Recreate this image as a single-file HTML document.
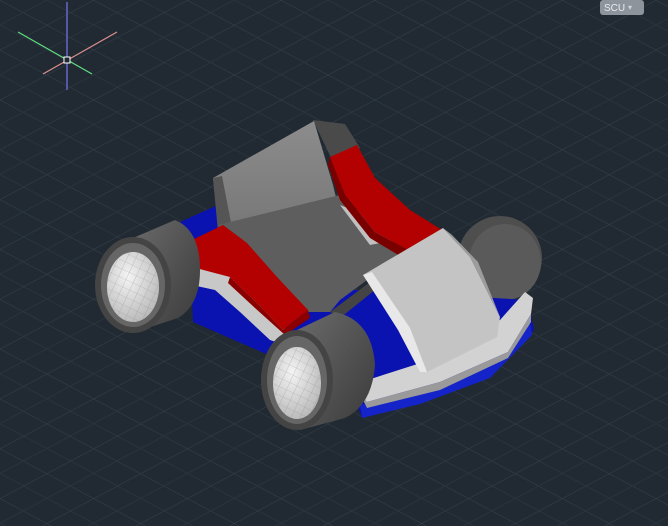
<!DOCTYPE html>
<html><head><meta charset="utf-8"><style>
html,body{margin:0;padding:0;background:#212a32;width:668px;height:526px;overflow:hidden}
svg{display:block}
</style></head><body>
<svg width="668" height="526" viewBox="0 0 668 526" xmlns="http://www.w3.org/2000/svg">
<defs>
<pattern id="g1" width="44" height="44" patternUnits="userSpaceOnUse" patternTransform="rotate(28)">
<line x1="0" y1="0" x2="44" y2="0" stroke="#35414c" stroke-width="1.1"/>
<line x1="0" y1="22" x2="44" y2="22" stroke="#29333c" stroke-width="1"/>
</pattern>
<pattern id="g2" width="44" height="44" patternUnits="userSpaceOnUse" patternTransform="rotate(-28)">
<line x1="0" y1="0" x2="44" y2="0" stroke="#35414c" stroke-width="1.1"/>
<line x1="0" y1="22" x2="44" y2="22" stroke="#29333c" stroke-width="1"/>
</pattern>
<pattern id="hg" width="8" height="8" patternUnits="userSpaceOnUse" patternTransform="rotate(25)">
<path d="M0,0 H8 M0,0 V8" stroke="#808080" stroke-width="0.6" fill="none"/>
</pattern>
<linearGradient id="tire" x1="0" y1="0" x2="1" y2="1"><stop offset="0" stop-color="#6a6a6a"/><stop offset="1" stop-color="#3a3a3a"/></linearGradient>
<linearGradient id="seat" x1="0" y1="0" x2="0" y2="1"><stop offset="0" stop-color="#8c8c8c"/><stop offset="0.6" stop-color="#7a7a7a"/><stop offset="1" stop-color="#555"/></linearGradient>
<radialGradient id="hub" cx="0.4" cy="0.35" r="0.7"><stop offset="0" stop-color="#f4f4f4"/><stop offset="1" stop-color="#b8b8b8"/></radialGradient>
</defs>
<rect width="668" height="526" fill="#212a32"/>
<rect width="668" height="526" fill="url(#g1)"/>
<rect width="668" height="526" fill="url(#g2)"/>

<line x1="67" y1="2" x2="67" y2="90" stroke="#7070e0" stroke-width="1.3"/>
<line x1="18" y1="32" x2="92" y2="74" stroke="#60e080" stroke-width="1.2"/>
<line x1="43" y1="74" x2="117" y2="32" stroke="#e09090" stroke-width="1.2"/>
<rect x="64" y="57" width="6" height="6" fill="#212830" stroke="#ffffff" stroke-width="1"/>

<rect x="600" y="0" width="44" height="15" rx="3" fill="#8e949c"/>
<text x="604" y="11" font-family="Liberation Sans, sans-serif" font-size="10" fill="#e8ecf0">SCU</text>
<text x="628" y="10" font-family="Liberation Sans, sans-serif" font-size="8" fill="#d0d4d8">▾</text>

<ellipse cx="500" cy="258" rx="42" ry="42" fill="#4e4e4e"/>
<ellipse cx="505" cy="262" rx="36" ry="38" fill="#5a5a5a"/>

<path d="M313,120 L345,124 L360,148 L333,162 Z" fill="#4a4a4a"/>

<path d="M180,222 L218,205 L355,290 L528,300 L534,330 L490,375 L420,402 L362,418 L355,398 L280,360 L193,322 L190,250 Z" fill="#0a12b0"/>
<path d="M360,405 L420,392 L490,360 L530,322 L532,335 L490,378 L420,404 L362,418 Z" fill="#1524c8"/>

<path d="M192,262 L230,272 L257,300 L285,328 L312,340 L300,350 L270,340 L240,312 L215,290 L192,285 Z" fill="#c8c8c8"/>

<path d="M213,178 L314,121 L333,185 L345,235 L300,280 L240,260 L218,225 Z" fill="url(#seat)"/>
<path d="M213,178 L222,176 L232,228 L218,232 Z" fill="#555"/>
<path d="M218,225 L340,195 L405,252 L340,300 L330,312 L307,312 L260,262 Z" fill="#5e5e5e"/>
<path d="M330,312 L405,256 L410,262 L340,318 Z" fill="#444"/>
<path d="M340,205 L365,215 L395,240 L370,245 Z" fill="#c0c0c0"/>

<path d="M192,240 L223,225 L247,243 L277,277 L308,310 L283,330 L257,303 L230,277 L192,267 Z" fill="#b30000"/>
<path d="M230,277 L257,303 L283,330 L308,310 L310,318 L285,335 L255,308 L228,283 Z" fill="#8a0000"/>

<path d="M330,157 L357,145 L375,178 L410,210 L442,230 L408,250 L375,232 L345,195 Z" fill="#b30000"/>
<path d="M330,157 L345,195 L375,232 L408,250 L400,256 L370,238 L340,200 L328,165 Z" fill="#7a0000"/>

<path d="M358,383 L430,360 L500,320 L525,292 L533,298 L531,314 L508,352 L440,382 L367,402 L358,398 Z" fill="#d2d2d2"/>
<path d="M358,390 L367,402 L440,382 L508,352 L531,314 L531,322 L508,358 L440,390 L367,408 Z" fill="#9a9a9a"/>

<path d="M363,275 L443,228 L470,257 L500,317 L497,337 L427,372 L405,330 Z" fill="#c4c4c4"/>
<path d="M363,275 L372,272 L410,328 L427,372 L420,372 L398,330 Z" fill="#e8e8e8"/>
<path d="M443,228 L452,235 L478,262 L500,317 L470,257 Z" fill="#9c9c9c"/>

<path d="M133,238 L175,220 Q200,230 200,270 Q200,305 178,318 L135,332 Z" fill="url(#tire)"/>
<ellipse cx="133" cy="285" rx="38" ry="48" fill="#444"/>
<ellipse cx="133" cy="285" rx="32" ry="42" fill="#666"/>
<ellipse cx="133" cy="287" rx="26" ry="35" fill="url(#hub)"/>
<ellipse cx="133" cy="287" rx="26" ry="35" fill="url(#hg)" opacity="0.6"/>

<path d="M297,330 L335,312 Q372,320 375,365 Q372,405 345,418 L300,430 Z" fill="url(#tire)"/>
<ellipse cx="297" cy="380" rx="36" ry="50" fill="#444"/>
<ellipse cx="297" cy="380" rx="30" ry="44" fill="#666"/>
<ellipse cx="297" cy="383" rx="24" ry="36" fill="url(#hub)"/>
<ellipse cx="297" cy="383" rx="24" ry="36" fill="url(#hg)" opacity="0.6"/>
</svg>
</body></html>
